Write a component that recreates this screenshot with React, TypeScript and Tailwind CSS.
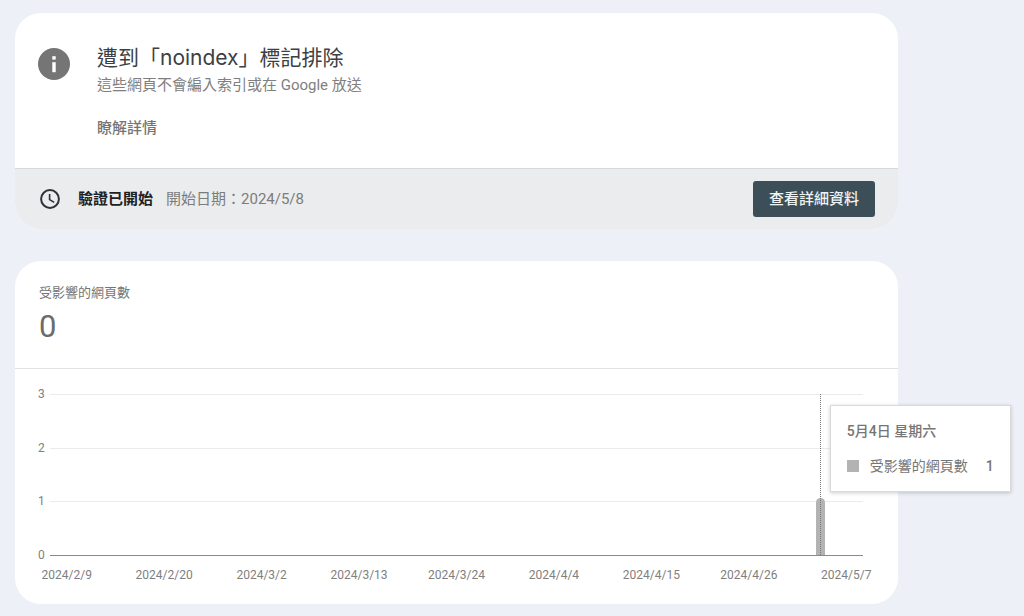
const yTicks = [3, 2, 1, 0];
const xTicks = [
  '2024/2/9',
  '2024/2/20',
  '2024/3/2',
  '2024/3/13',
  '2024/3/24',
  '2024/4/4',
  '2024/4/15',
  '2024/4/26',
  '2024/5/7',
];

function InfoIcon() {
  return (
    <svg viewBox="0 0 32 32" className="size-8 shrink-0" aria-hidden="true">
      <circle cx="16" cy="16" r="16" fill="#757575" />
      <rect x="14.3" y="8.2" width="3.4" height="3.4" fill="#fff" />
      <rect x="14.3" y="14.2" width="3.4" height="10" fill="#fff" />
    </svg>
  );
}

function ClockIcon() {
  return (
    <svg viewBox="0 0 20 20" className="size-5 shrink-0" fill="none" stroke="#303236" aria-hidden="true">
      <circle cx="10" cy="10" r="8.9" strokeWidth="2" />
      <path d="M9.6 5v5.6l4.6 2.8" strokeWidth="1.6" />
    </svg>
  );
}

function IssueCard() {
  return (
    <section className="overflow-hidden rounded-[26px] bg-white">
      <div className="flex gap-[27px] px-[23px] pt-8 pb-7">
        <div className="pt-[3px]">
          <InfoIcon />
        </div>
        <div className="min-w-0">
          <h1 className="font-[Inter,'Noto_Sans_CJK_TC',sans-serif] text-[21px] leading-[26px] font-normal text-[#3c4043]">
            遭到「noindex」標記排除
          </h1>
          <p className="text-[15px] leading-7 text-[#808080]">這些網頁不會編入索引或在 Google 放送</p>
          <a href="#learn-more" className="mt-[17px] block w-fit text-[15px] leading-6 font-medium text-[#757575]">
            瞭解詳情
          </a>
        </div>
      </div>
      <div className="flex items-center border-t border-[#d6d9da] bg-[#ebeced] py-3 pr-[23px] pl-[25px] text-[15px] leading-6">
        <ClockIcon />
        <strong className="ml-[18px] font-bold text-[#202124]">驗證已開始</strong>
        <span className="ml-[13px] text-[#7c7c7c]">開始日期：2024/5/8</span>
        <button
          type="button"
          className="ml-auto h-9 rounded-[3px] bg-[#3c4f58] px-4 text-[15px] font-medium text-[#eef3f5]"
        >
          查看詳細資料
        </button>
      </div>
    </section>
  );
}

function Tooltip() {
  return (
    <div
      role="tooltip"
      className="absolute top-[11px] left-[14px] w-max border border-[#dadada] bg-white px-4 py-[13px] text-[14px] leading-6 text-[#757575] shadow-[0_1px_4px_rgba(0,0,0,0.2)]"
    >
      <div className="font-medium">5月4日 星期六</div>
      <div className="mt-[11px] flex items-center">
        <span className="size-3 bg-[#b3b3b3]" />
        <span className="ml-[11px]">受影響的網頁數</span>
        <span className="ml-[18px] font-medium">1</span>
      </div>
    </div>
  );
}

function Chart() {
  return (
    <div className="pt-[18px] pb-[22px] text-[12px] leading-[14px] text-[#808080]">
      <div className="flex pr-[35px] pl-[23px]">
        <div className="flex h-[175px] w-3 flex-col justify-between">
          {yTicks.map((tick) => (
            <span key={tick}>{tick}</span>
          ))}
        </div>
        <div className="relative my-[7px] flex h-[162px] flex-1 flex-col border-b border-[#8a8a8a]">
          <div className="flex-1 border-t border-[#ebebeb]" />
          <div className="flex-1 border-t border-[#ebebeb]" />
          <div className="flex-1 border-t border-[#ebebeb]" />
          <div className="absolute top-0 bottom-0 left-[94.2%] flex w-[9px] justify-center">
            <div className="absolute bottom-0 h-[57px] w-full rounded-t-full bg-[#b3b3b3]" />
            <div className="relative h-full border-l border-dotted border-[#757575]" />
            <Tooltip />
          </div>
        </div>
      </div>
      <div className="mt-[5px] grid grid-cols-9 px-[3px] text-center">
        {xTicks.map((tick) => (
          <span key={tick}>{tick}</span>
        ))}
      </div>
    </div>
  );
}

function PagesCard() {
  return (
    <section className="rounded-[26px] bg-white">
      <div className="border-b border-[#e0e2e3] px-6 pt-5 pb-[23px]">
        <h2 className="text-[13px] leading-6 text-[#757575]">受影響的網頁數</h2>
        <div className="mt-1 text-[31px] leading-9 text-[#6b6b6b]">0</div>
      </div>
      <Chart />
    </section>
  );
}

export default function App() {
  return (
    <main
      className="flex min-h-screen flex-col gap-8 bg-[#edf0f7] pt-[13px] pr-[126px] pb-[11px] pl-[15px] font-[Roboto,'Noto_Sans_CJK_TC',sans-serif]"
      lang="zh-Hant"
    >
      <IssueCard />
      <PagesCard />
    </main>
  );
}
